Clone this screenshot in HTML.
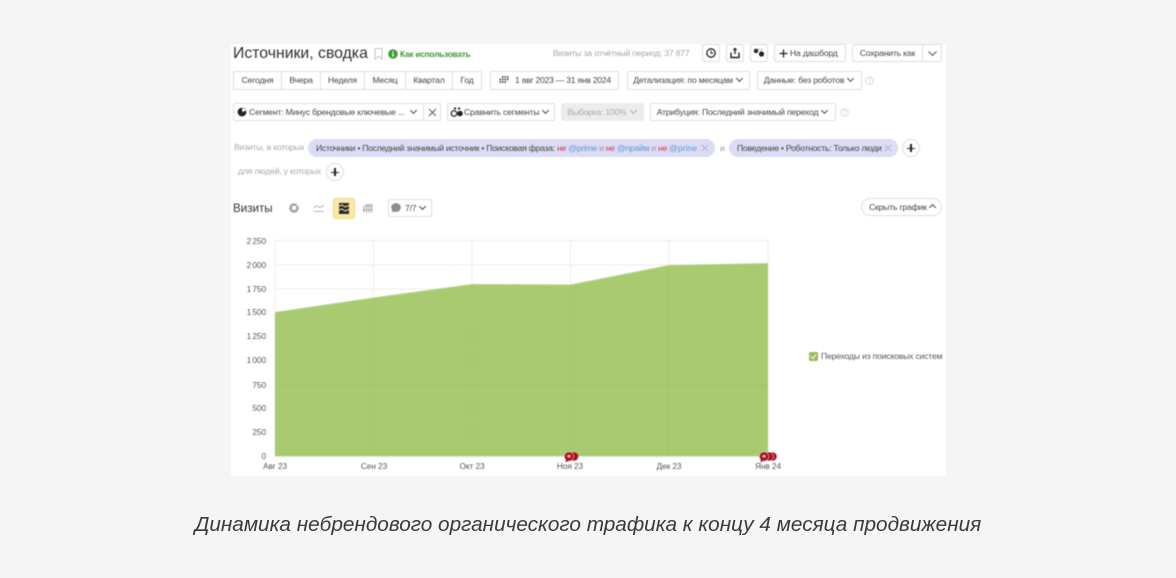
<!DOCTYPE html>
<html lang="ru"><head><meta charset="utf-8"><title>Источники, сводка</title>
<style>
html,body{margin:0;padding:0;width:1176px;height:578px;overflow:hidden;background:#f5f5f5}
body{position:relative;font-family:"Liberation Sans",sans-serif;color:#333}
#p{position:absolute;left:231px;top:44px;width:715px;height:432px;background:#fff}
#w{position:absolute;left:0;top:0;width:1176px;height:578px;filter:blur(.5px)}
.t{position:absolute;white-space:nowrap;font-size:8.6px;letter-spacing:-.18px;line-height:12px;color:#444}
.b{position:absolute;box-sizing:border-box;background:#fff;border:1px solid #dedede;border-radius:2px;font-size:8.6px;letter-spacing:-.18px;color:#444;white-space:nowrap;text-align:center;line-height:16px;height:18px}
.chip{position:absolute;height:18px;background:#dcdcf5;border-radius:9px;font-size:8.6px;letter-spacing:-.25px;line-height:18px;color:#444;white-space:nowrap;box-sizing:border-box;padding-left:8px}
.r{color:#d8344f}.u{color:#5b9bd5}
.pl{position:absolute;box-sizing:border-box;width:18px;height:18px;border:1px solid #ddd;border-radius:50%;background:#fff}
.pl:before{content:"";position:absolute;left:4px;top:7.5px;width:8px;height:1.5px;background:#222}
.pl:after{content:"";position:absolute;left:7.2px;top:4.2px;width:1.5px;height:8px;background:#222}
svg{position:absolute;overflow:visible}
.ch{display:inline-block;width:4px;height:4px;border-right:1px solid #444;border-bottom:1px solid #444;transform:rotate(45deg);margin:0 2px 2px 5px}
.ax{position:absolute;font-size:8.3px;letter-spacing:-.08px;line-height:10px;color:#555;white-space:nowrap}
.y{width:36px;left:230px;text-align:right;word-spacing:-1px}
.x{width:40px;text-align:center;top:461px}
#cap{position:absolute;left:0;top:512px;width:1176px;text-align:center;font-size:20.75px;line-height:25px;font-style:italic;color:#3a3a3a}
.hp{font-size:6px;fill:#d0d0d0;font-family:"Liberation Sans",sans-serif}
</style></head><body>
<div id="w">
<div id="p"></div>

<div class="t" style="left:233px;top:44px;font-size:15.8px;letter-spacing:0;line-height:20px;color:#2f2f2f">Источники, сводка</div>
<svg style="left:374px;top:48px" width="9" height="12"><path d="M1 .5H8V11L4.500 8.500 1 11Z" fill="none" stroke="#c4c4c4" stroke-width="1"/></svg>
<svg style="left:388px;top:49px" width="10" height="10"><circle cx="5" cy="5" r="4.800" fill="#3f9c35"/><rect x="4.300" y="4.200" width="1.400" height="3.600" fill="#fff"/><rect x="4.300" y="2.200" width="1.400" height="1.300" fill="#fff"/></svg>
<div class="t" style="left:400px;top:48px;color:#3f9535;font-weight:bold;font-size:8.3px;letter-spacing:-.22px">Как использовать</div>
<div class="t" style="left:553px;top:47px;color:#a5a5a5">Визиты за отчётный период: 37 877</div>

<div class="b" style="left:702px;top:44px;width:18px"></div>
<svg style="left:706px;top:48px" width="10" height="10"><circle cx="5" cy="5" r="4.200" fill="none" stroke="#222" stroke-width="1.300"/><path d="M5 2.500V5.300H7.300" fill="none" stroke="#222" stroke-width="1"/></svg>
<div class="b" style="left:726px;top:44px;width:18px"></div>
<svg style="left:730px;top:47px" width="10" height="12"><path d="M5 .5 2.500 3H4.300V7H5.700V3H7.500Z" fill="#222"/><path d="M1 5.500V10.500H9V5.500" fill="none" stroke="#222" stroke-width="1.400"/></svg>
<div class="b" style="left:750px;top:44px;width:18px"></div>
<svg style="left:753px;top:48px" width="12" height="10"><circle cx="3" cy="3" r="2.200" fill="#222"/><circle cx="8.500" cy="6" r="2.600" fill="#222"/><path d="M5.500 .5V2M8.500 1V2.500" stroke="#777" stroke-width="1"/></svg>
<div class="b" style="left:774px;top:44px;width:72px;text-align:left;padding-left:15px">На дашборд</div>
<svg style="left:779px;top:49px" width="9" height="9"><path d="M4.500 .5V8.500M.5 4.500H8.500" stroke="#222" stroke-width="1.300"/></svg>
<div class="b" style="left:852px;top:44px;width:71px">Сохранить как</div>
<div class="b" style="left:922px;top:44px;width:20px;"></div>
<svg style="left:928px;top:51px" width="9" height="5"><path d="M.5 .5 4.500 4.500 8.500 .5" fill="none" stroke="#555" stroke-width="1"/></svg>

<div class="b" style="left:233px;top:71px;width:249px;height:19px"></div>
<div class="b" style="left:233px;top:71px;width:49px;height:19px;line-height:17px">Сегодня</div>
<div class="b" style="left:281px;top:71px;width:40px;height:19px;line-height:17px">Вчера</div>
<div class="b" style="left:320px;top:71px;width:45px;height:19px;line-height:17px">Неделя</div>
<div class="b" style="left:364px;top:71px;width:42px;height:19px;line-height:17px">Месяц</div>
<div class="b" style="left:405px;top:71px;width:48px;height:19px;line-height:17px">Квартал</div>
<div class="b" style="left:452px;top:71px;width:30px;height:19px;line-height:17px">Год</div>

<div class="b" style="left:490px;top:71px;width:129px;height:19px;line-height:17px;text-align:left;padding-left:24px;letter-spacing:-.25px">1 авг 2023 — 31 янв 2024</div>
<svg style="left:498px;top:76px" width="11" height="8"><path d="M4 1h1.500M6.500 1H8M9 1h1.500M1.500 3.500H3M4 3.500h1.500M6.500 3.500H8M9 3.500h1.500M1.500 6H3M4 6h1.500M6.500 6H8" stroke="#222" stroke-width="1.600"/></svg>
<div class="b" style="left:627px;top:71px;width:123px;height:19px;line-height:17px">Детализация: по месяцам<span class="ch" style="margin-left:4px"></span></div>
<div class="b" style="left:757px;top:71px;width:105px;height:19px;line-height:17px">Данные: без роботов<span class="ch" style="margin-left:4px"></span></div>
<svg style="left:865px;top:76px" width="9" height="9"><circle cx="4.500" cy="4.500" r="3.800" fill="none" stroke="#d8d8d8"/><text x="3" y="6.500" class="hp">?</text></svg>

<div class="b" style="left:233px;top:103px;width:191px;text-align:left;padding-left:15px;line-height:16px">Сегмент: Минус брендовые ключевые ...<span class="ch" style="margin-left:6px"></span></div>
<svg style="left:237px;top:107px" width="10" height="10"><circle cx="5" cy="5" r="4.400" fill="#222"/><path d="M5 5 5.300 .5 9.500 3.500Z" fill="#fff"/></svg>
<div class="b" style="left:423px;top:103px;width:18px"></div>
<svg style="left:428px;top:108px" width="9" height="9"><path d="M1 1 8 8M8 1 1 8" stroke="#555" stroke-width=".9"/></svg>
<div class="b" style="left:447px;top:103px;width:108px;text-align:left;padding-left:16px">Сравнить сегменты<span class="ch" style="margin-left:4px"></span></div>
<svg style="left:451px;top:107px" width="12" height="10"><circle cx="3" cy="6.500" r="2.800" fill="none" stroke="#222" stroke-width="1.200"/><circle cx="9" cy="6.500" r="2.800" fill="#222"/><path d="M3 1.500h2M7 1.500h2" stroke="#222" stroke-width="2"/></svg>
<div class="b" style="left:561px;top:103px;width:83px;background:#ececec;border-color:#ececec;color:#aaa">Выборка: 100%<span class="ch" style="margin-left:4px;border-color:#aaa"></span></div>
<div class="b" style="left:650px;top:103px;width:186px">Атрибуция: Последний значимый переход<span class="ch" style="margin-left:4px"></span></div>
<svg style="left:840px;top:108px" width="9" height="9"><circle cx="4.500" cy="4.500" r="3.800" fill="none" stroke="#d8d8d8"/><text x="3" y="6.500" class="hp">?</text></svg>

<div class="t" style="left:234px;top:141px;color:#a8a8a8">Визиты, в которых</div>
<div class="chip" style="left:308px;top:139px;width:407px">Источники • Последний значимый источник • Поисковая фраза: <span class="r">не</span> <span class="u">@prime</span> <span style="color:#999">и</span> <span class="r">не</span> <span class="u">@прайм</span> <span style="color:#999">и</span> <span class="r">не</span> <span class="u" style="letter-spacing:0">@prine</span></div>
<svg style="left:701px;top:144px" width="8" height="8"><path d="M1 1 7 7M7 1 1 7" stroke="#b3b3cc" stroke-width=".9"/></svg>
<div class="t" style="left:720px;top:142px;color:#999">и</div>
<div class="chip" style="left:729px;top:139px;width:169px">Поведение • Роботность: Только люди</div>
<svg style="left:884px;top:144px" width="8" height="8"><path d="M1 1 7 7M7 1 1 7" stroke="#b3b3cc" stroke-width=".9"/></svg>
<div class="pl" style="left:902px;top:139px"></div>
<div class="t" style="left:238px;top:165px;color:#a8a8a8">для людей, у которых</div>
<div class="pl" style="left:326px;top:163px"></div>

<div class="t" style="left:233px;top:202px;font-size:11.600px;letter-spacing:0;line-height:14px;color:#333">Визиты</div>
<svg style="left:289px;top:203px" width="10" height="10"><circle cx="5" cy="5" r="3.500" fill="none" stroke="#a2a2a2" stroke-width="2.600"/><path d="M5 5 9 1.500" stroke="#fff" stroke-width=".8"/></svg>
<svg style="left:313px;top:204px" width="12" height="9"><path d="M.5 3.500 4 2 7 3.500 11 1.500M.5 7.500H11" fill="none" stroke="#b5b5b5" stroke-width="1"/></svg>
<div style="position:absolute;left:333px;top:198px;width:22px;height:21px;background:#fbe8a6;border-radius:2px;box-sizing:border-box;border:1px solid #f2dc93"></div>
<svg style="left:339px;top:203px" width="10" height="11"><rect width="10" height="11" fill="#2b2b2b"/><path d="M0 3 3 2 6 4 10 2.500M0 7 3 6 6 8 10 6.500" fill="none" stroke="#fbe8a6" stroke-width="1"/></svg>
<svg style="left:363px;top:203px" width="10" height="10"><path d="M1 3v6.500M3.500 1v8.500M6 1v8.500M8.500 1v8.500" stroke="#a5a5a5" stroke-width="1.700"/><path d="M0 5h10" stroke="#fff" stroke-width=".7"/><path d="M0 8.500h10" stroke="#fff" stroke-width=".6"/></svg>
<div class="b" style="left:388px;top:199px;width:44px;text-align:left;padding-left:16px">7/7<span class="ch" style="margin-left:4px"></span></div>
<svg style="left:391px;top:203px" width="10" height="10"><ellipse cx="5" cy="4.500" rx="4.800" ry="4.400" fill="#8c8c8c"/><path d="M1.500 6.500 1 9.500 4.500 8Z" fill="#8c8c8c"/></svg>
<div class="b" style="left:861px;top:198px;width:81px;border-radius:9px;text-align:left;padding-left:7px">Скрыть график<span class="ch" style="transform:rotate(225deg);margin:0 0 0 3px"></span></div>

<svg style="left:0;top:0" width="1176" height="578">
<g stroke="#ececec" stroke-width="1" fill="none">
<path d="M275 240.500H768M275 265H768M275 289H768M275 312.500H768"/>
<path d="M373.500 240V456M472 240V456M570.500 240V456M669 240V456M768 240V456M275 240V456"/>
</g>
<path d="M275 312.500 373.500 298 472 284.500 570.500 285 669 265.500 768 263.500V456H275Z" fill="#a8cb71"/>
<g stroke="#a1c569" stroke-width="1" fill="none">
<path d="M275 336H768M275 360H768M275 384.500H768M275 408H768M275 432H768"/>
<path d="M373.500 298V456M472 285V456M570.500 285V456M669 266V456"/>
</g>
<path d="M275 312.500 373.500 298 472 284.500 570.500 285 669 265.500 768 263.500" fill="none" stroke="#b5d384" stroke-width="1"/>
<path d="M275 456.500H768" stroke="#dbe6c8" stroke-width="1"/>
<g fill="#ab1220">
<circle cx="574" cy="456.500" r="4.300"/><circle cx="569" cy="456.500" r="4.700" stroke="#fff" stroke-width=".5"/><path d="M566 459 565.500 462.500 569 460.500Z"/>
<circle cx="772.500" cy="456.500" r="4.300"/><circle cx="769" cy="456.500" r="4.500" stroke="#fff" stroke-width=".5"/><circle cx="764" cy="456.500" r="4.700" stroke="#fff" stroke-width=".5"/><path d="M761 459 760.500 462.500 764 460.500Z"/>
</g>
<rect x="567.500" y="455" width="3" height="2.500" fill="#f0c0c5"/>
<rect x="762.500" y="455" width="3" height="2.500" fill="#f0c0c5"/>
</svg>

<div class="ax y" style="top:236px">2 250</div>
<div class="ax y" style="top:260px">2 000</div>
<div class="ax y" style="top:284px">1 750</div>
<div class="ax y" style="top:307px">1 500</div>
<div class="ax y" style="top:331px">1 250</div>
<div class="ax y" style="top:355px">1 000</div>
<div class="ax y" style="top:380px">750</div>
<div class="ax y" style="top:403px">500</div>
<div class="ax y" style="top:427px">250</div>
<div class="ax y" style="top:451px">0</div>
<div class="ax x" style="left:255px">Авг 23</div>
<div class="ax x" style="left:354px">Сен 23</div>
<div class="ax x" style="left:452px">Окт 23</div>
<div class="ax x" style="left:550px">Ноя 23</div>
<div class="ax x" style="left:649px">Дек 23</div>
<div class="ax x" style="left:748px">Янв 24</div>

<svg style="left:809px;top:352px" width="9" height="9"><rect width="9" height="9" rx="1.500" fill="#97bd5c"/><path d="M2 4.500 4 6.500 7 2.500" fill="none" stroke="#fff" stroke-width="1"/></svg>
<div class="t" style="left:821px;top:350px;color:#555">Переходы из поисковых систем</div>
</div>
<div id="cap">Динамика небрендового органического трафика к концу 4 месяца продвижения</div>
</body></html>
